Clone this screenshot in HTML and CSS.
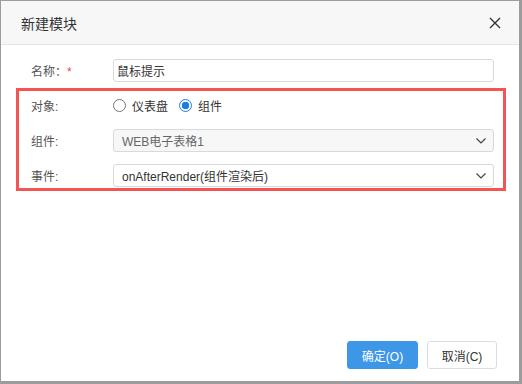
FILE: index.html
```html
<!DOCTYPE html>
<html lang="zh-CN">
<head>
    <meta charset="UTF-8">
    <title>新建模块</title>
    <link rel="stylesheet" href="styles.css">
</head>
<body>
    <div class="dialog">
        <div class="dialog-header">
            <span class="dialog-title">新建模块</span>
            <svg class="close" width="12" height="12" viewBox="0 0 12 12">
                <path d="M1 1L11 11M11 1L1 11" stroke="#333" stroke-width="1.4" fill="none"/>
            </svg>
        </div>

        <div class="dialog-body">
            <div class="row">
                <label class="label">名称：<span class="required">*</span></label>
                <input class="text-input" type="text" value="鼠标提示">
            </div>

            <div class="highlight">
                <div class="row">
                    <label class="label">对象:</label>
                    <div class="radios">
                        <label class="radio"><span class="dot"></span>仪表盘</label>
                        <label class="radio checked"><span class="dot"></span>组件</label>
                    </div>
                </div>
                <div class="row">
                    <label class="label">组件:</label>
                    <div class="select disabled">
                        <span>WEB电子表格1</span>
                        <svg width="10" height="6" viewBox="0 0 10 6"><path d="M0.5 0.5L5 5L9.5 0.5" stroke="#444" stroke-width="1.2" fill="none"/></svg>
                    </div>
                </div>
                <div class="row">
                    <label class="label">事件:</label>
                    <div class="select">
                        <span>onAfterRender(组件渲染后)</span>
                        <svg width="10" height="6" viewBox="0 0 10 6"><path d="M0.5 0.5L5 5L9.5 0.5" stroke="#444" stroke-width="1.2" fill="none"/></svg>
                    </div>
                </div>
            </div>
        </div>

        <div class="dialog-footer">
            <button class="btn btn-primary">确定(O)</button>
            <button class="btn">取消(C)</button>
        </div>
    </div>
</body>
</html>
```

FILE: styles.css
```css
body {
    margin: 0;
    padding: 1px 3px 3px 1px;
    background-color: #9c9c9c;
    font-family: "Liberation Sans", "Noto Sans CJK SC", sans-serif;
    font-size: 12px;
    color: #333;
}

.dialog {
    height: 380px;
    background-color: #fff;
    display: flex;
    flex-direction: column;
}

.dialog-header {
    height: 43px;
    background-color: #f7f7f7;
    border-bottom: 1px solid #e6e6e6;
    display: flex;
    align-items: center;
    justify-content: space-between;
    padding: 0 18px 0 20px;
}

.dialog-title {
    font-size: 14px;
    color: #333;
}

.dialog-body {
    flex: 1;
    padding: 14px 13px 0 15px;
}

.row {
    display: flex;
    align-items: center;
    height: 23px;
}

.row + .row {
    margin-top: 12px;
}

.label {
    width: 97px;
    padding-left: 15px;
    box-sizing: border-box;
    color: #555;
    flex-shrink: 0;
}

.required {
    color: #f04848;
}

.text-input {
    flex: 1;
    height: 23px;
    box-sizing: border-box;
    border: 1px solid #d9d9d9;
    border-radius: 3px;
    padding: 0 3px;
    font-family: inherit;
    font-size: 12px;
    color: #333;
    margin-right: 12px;
}

.highlight {
    border: 3px solid #f55454;
    margin-top: 6px;
    padding: 3px 9px 1px 0;
}

.highlight .label {
    width: 94px;
    padding-left: 12px;
}

.radios {
    display: flex;
    gap: 11px;
    color: #333;
}

.radio {
    display: flex;
    align-items: center;
    gap: 6px;
}

.dot {
    width: 11px;
    height: 11px;
    border: 1px solid #777;
    border-radius: 50%;
    box-sizing: content-box;
}

.radio.checked .dot {
    border-color: #1a7fe8;
    background: radial-gradient(circle, #1a7fe8 0 3.5px, #fff 4px);
}

.select {
    flex: 1;
    height: 23px;
    box-sizing: border-box;
    border: 1px solid #d9d9d9;
    border-radius: 3px;
    padding: 0 7px 0 8px;
    display: flex;
    align-items: center;
    justify-content: space-between;
    color: #333;
}

.select.disabled {
    background-color: #f7f7f7;
    color: #666;
}

.dialog-footer {
    display: flex;
    justify-content: flex-end;
    gap: 9px;
    padding: 0 22px 12px 0;
}

.btn {
    width: 70px;
    height: 28px;
    border: 1px solid #ddd;
    border-radius: 3px;
    background-color: #fff;
    font-family: inherit;
    font-size: 12px;
    color: #333;
    padding: 0;
}

.btn-primary {
    width: 71px;
    background-color: #3d97e6;
    border-color: #3d97e6;
    color: #fff;
}
```
